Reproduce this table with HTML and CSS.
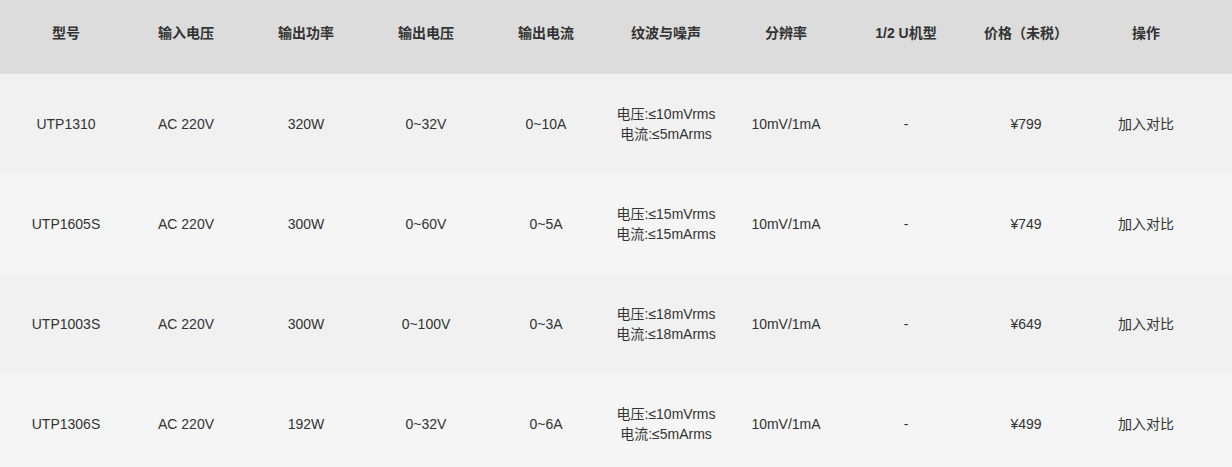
FILE: index.html
```html
<!DOCTYPE html>
<html lang="zh">
<head>
<meta charset="utf-8">
<link rel="stylesheet" href="styles.css">
</head>
<body>
<div class="table">
  <div class="row head">
    <div class="cell">型号</div>
    <div class="cell">输入电压</div>
    <div class="cell">输出功率</div>
    <div class="cell">输出电压</div>
    <div class="cell">输出电流</div>
    <div class="cell">纹波与噪声</div>
    <div class="cell">分辨率</div>
    <div class="cell">1/2 U机型</div>
    <div class="cell">价格（未税）</div>
    <div class="cell">操作</div>
  </div>
  <div class="row odd">
    <div class="cell">UTP1310</div>
    <div class="cell">AC 220V</div>
    <div class="cell">320W</div>
    <div class="cell">0~32V</div>
    <div class="cell">0~10A</div>
    <div class="cell multi"><span>电压:≤10mVrms</span><span>电流:≤5mArms</span></div>
    <div class="cell">10mV/1mA</div>
    <div class="cell">-</div>
    <div class="cell">¥799</div>
    <div class="cell">加入对比</div>
  </div>
  <div class="row even">
    <div class="cell">UTP1605S</div>
    <div class="cell">AC 220V</div>
    <div class="cell">300W</div>
    <div class="cell">0~60V</div>
    <div class="cell">0~5A</div>
    <div class="cell multi"><span>电压:≤15mVrms</span><span>电流:≤15mArms</span></div>
    <div class="cell">10mV/1mA</div>
    <div class="cell">-</div>
    <div class="cell">¥749</div>
    <div class="cell">加入对比</div>
  </div>
  <div class="row odd">
    <div class="cell">UTP1003S</div>
    <div class="cell">AC 220V</div>
    <div class="cell">300W</div>
    <div class="cell">0~100V</div>
    <div class="cell">0~3A</div>
    <div class="cell multi"><span>电压:≤18mVrms</span><span>电流:≤18mArms</span></div>
    <div class="cell">10mV/1mA</div>
    <div class="cell">-</div>
    <div class="cell">¥649</div>
    <div class="cell">加入对比</div>
  </div>
  <div class="row even">
    <div class="cell">UTP1306S</div>
    <div class="cell">AC 220V</div>
    <div class="cell">192W</div>
    <div class="cell">0~32V</div>
    <div class="cell">0~6A</div>
    <div class="cell multi"><span>电压:≤10mVrms</span><span>电流:≤5mArms</span></div>
    <div class="cell">10mV/1mA</div>
    <div class="cell">-</div>
    <div class="cell">¥499</div>
    <div class="cell">加入对比</div>
  </div>
</div>
</body>
</html>
```
FILE: styles.css
```css
html, body {
  margin: 0;
  padding: 0;
  background: #f5f5f5;
}
body {
  font-family: "Liberation Sans", Arial, "Noto Sans CJK SC", sans-serif;
  font-size: 14px;
  color: #333;
}
.table {
  display: flex;
  flex-direction: column;
}
.row {
  display: grid;
  grid-template-columns: repeat(10, 120px);
  padding-left: 6px;
  height: 100px;
  align-items: center;
}
.row.head {
  height: 74px;
  background: #dcdcdc;
  font-weight: bold;
  color: #333;
}
.row.head .cell {
  padding-bottom: 8px;
}
.row.odd {
  background: #f1f1f1;
}
.row.even {
  background: #f5f5f5;
}
.cell {
  text-align: center;
  line-height: 20px;
}
.multi {
  display: flex;
  flex-direction: column;
  align-items: center;
}
```
